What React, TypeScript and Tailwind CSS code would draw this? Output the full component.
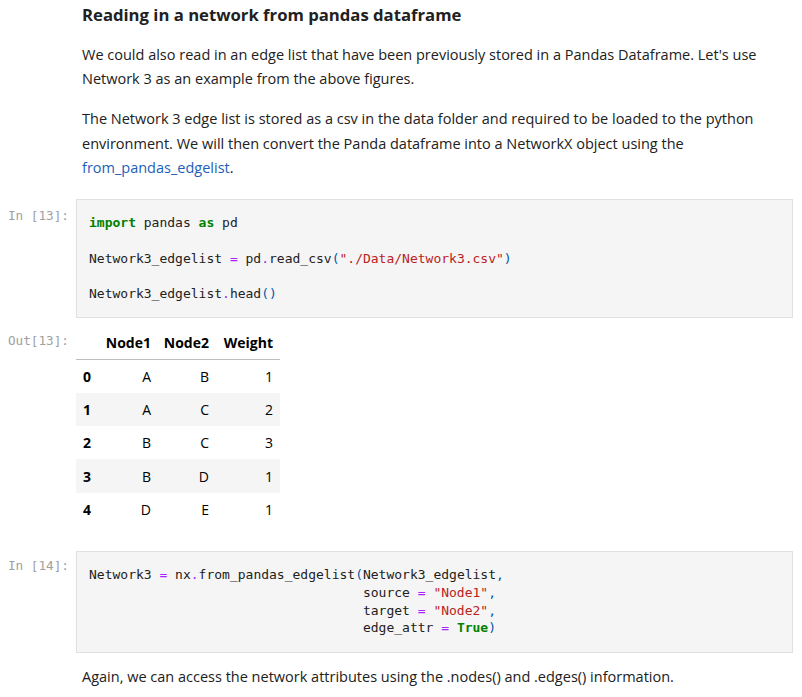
import React from "react";

const K = ({ children }: { children: React.ReactNode }) => (
  <span className="font-bold text-[#008000]">{children}</span>
);
const O = ({ children }: { children: React.ReactNode }) => (
  <span className="text-[#aa22ff]">{children}</span>
);
const S = ({ children }: { children: React.ReactNode }) => (
  <span className="text-[#ba2121]">{children}</span>
);
const P = ({ children }: { children: React.ReactNode }) => (
  <span className="text-[#0055aa]">{children}</span>
);

function Prompt({ label }: { label: string }) {
  return (
    <div className="w-[76px] shrink-0 pr-[7px] text-right font-['DejaVu_Sans_Mono',monospace] text-[12.7px] leading-[17.7px] text-[#a0a0a0] whitespace-pre">
      {label}
    </div>
  );
}

const rows = [
  ["0", "A", "B", "1"],
  ["1", "A", "C", "2"],
  ["2", "B", "C", "3"],
  ["3", "B", "D", "1"],
  ["4", "D", "E", "1"],
];

export default function App() {
  const code = "font-['DejaVu_Sans_Mono',monospace] text-[13px] leading-[17.7px] text-[#212121] whitespace-pre";
  return (
    <div className="w-[802px] h-[697px] overflow-hidden bg-white font-['Open_Sans',sans-serif] text-[#212121]">
      {/* markdown cell */}
      <div className="pl-[82px] pt-[3px]">
        <h3 className="text-[16.7px] leading-[24px] font-bold">Reading in a network from pandas dataframe</h3>
        <p className="mt-[15.5px] text-[14.5px] leading-[24.5px]">
          We could also read in an edge list that have been previously stored in a Pandas Dataframe. Let's use
          <br />
          Network 3 as an example from the above figures.
        </p>
        <p className="mt-[15.5px] text-[14.5px] leading-[24.5px]">
          The Network 3 edge list is stored as a csv in the data folder and required to be loaded to the python
          <br />
          environment. We will then convert the Panda dataframe into a NetworkX object using the
          <br />
          <span className="text-[#1d5fb8]">from_pandas_edgelist</span>.
        </p>
      </div>

      {/* code cell 1 */}
      <div className="mt-[18px] flex">
        <div className="pt-[8px]">
          <Prompt label="In [13]:" />
        </div>
        <div className={"w-[717px] border border-[#e0e0e0] bg-[#f5f5f5] px-[12px] py-[14.6px] " + code}>
          <div>
            <K>import</K> pandas <K>as</K> pd
          </div>
          <div> </div>
          <div>
            Network3_edgelist <O>=</O> pd<O>.</O>read_csv<P>(</P>
            <S>"./Data/Network3.csv"</S>
            <P>)</P>
          </div>
          <div> </div>
          <div>
            Network3_edgelist<O>.</O>head<P>()</P>
          </div>
        </div>
      </div>

      {/* output cell */}
      <div className="mt-[8px] flex">
        <div className="pt-[6px]">
          <Prompt label="Out[13]:" />
        </div>
        <table className="border-collapse text-[14px] text-black">
          <thead>
            <tr className="h-[33px] border-b border-[#bdbdbd]">
              <th className="w-[24px]"></th>
              <th className="w-[58px] pr-[7px] text-right font-bold">Node1</th>
              <th className="w-[58px] pr-[7px] text-right font-bold">Node2</th>
              <th className="w-[64px] pr-[7px] text-right font-bold">Weight</th>
            </tr>
          </thead>
          <tbody>
            {rows.map((r, i) => (
              <tr key={i} className={"h-[33.4px] " + (i % 2 === 1 ? "bg-[#f5f5f5]" : "bg-white")}>
                <th className="pl-[7px] text-left font-bold">{r[0]}</th>
                <td className="pr-[7px] text-right">{r[1]}</td>
                <td className="pr-[7px] text-right">{r[2]}</td>
                <td className="pr-[7px] text-right">{r[3]}</td>
              </tr>
            ))}
          </tbody>
        </table>
      </div>

      {/* code cell 2 */}
      <div className="mt-[24.5px] flex">
        <div className="pt-[6px]">
          <Prompt label="In [14]:" />
        </div>
        <div className={"w-[717px] border border-[#e0e0e0] bg-[#f5f5f5] px-[12px] py-[14.6px] " + code}>
          <div>
            Network3 <O>=</O> nx<O>.</O>from_pandas_edgelist<P>(</P>Network3_edgelist<P>,</P>
          </div>
          <div>
            {"                                   "}source <O>=</O> <S>"Node1"</S>
            <P>,</P>
          </div>
          <div>
            {"                                   "}target <O>=</O> <S>"Node2"</S>
            <P>,</P>
          </div>
          <div>
            {"                                   "}edge_attr <O>=</O> <K>True</K>
            <P>)</P>
          </div>
        </div>
      </div>

      {/* markdown 2 */}
      <div className="pl-[82px] pt-[12px]">
        <p className="text-[14.5px] leading-[24.5px]">
          Again, we can access the network attributes using the .nodes() and .edges() information.
        </p>
      </div>
    </div>
  );
}
